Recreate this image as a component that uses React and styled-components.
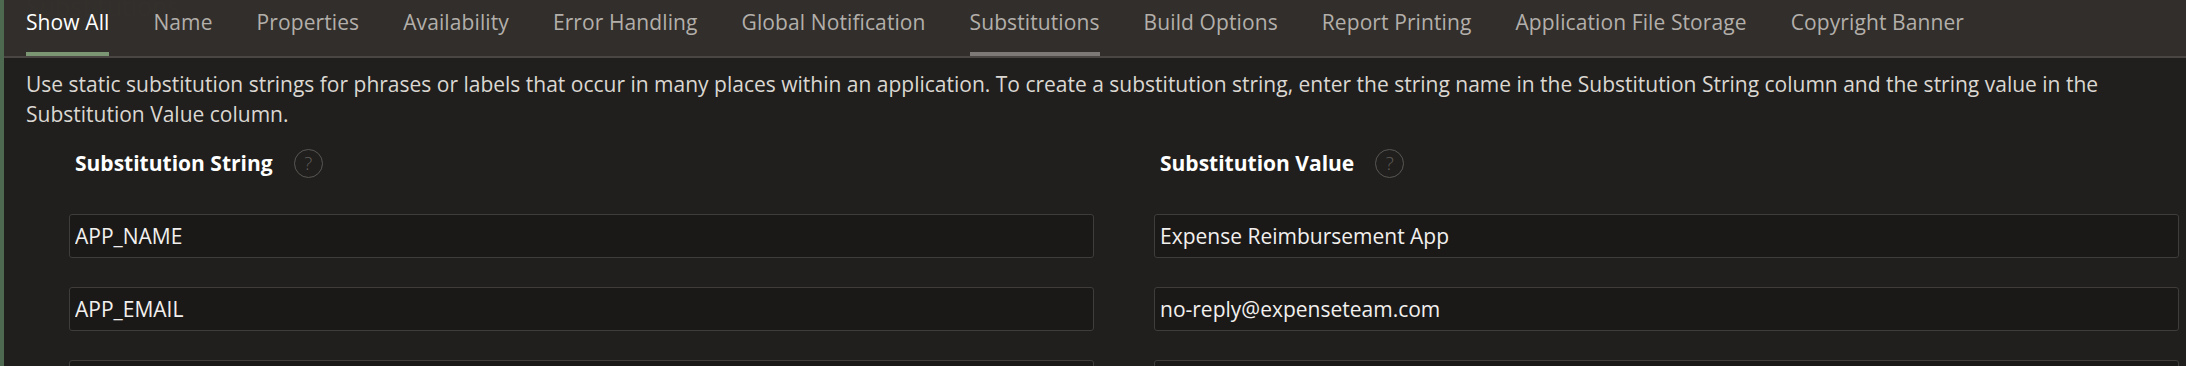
import React from 'react';
import styled, { createGlobalStyle } from 'styled-components';

const GlobalStyle = createGlobalStyle`
  html, body {
    margin: 0;
    padding: 0;
    background: #201f1d;
  }
  body {
    font-family: 'Open Sans', 'Noto Sans', sans-serif;
    color: #d9d5d0;
  }
`;

const PageDiv = styled.div`
  position: relative;
  min-height: 366px;
  border-left: 4px solid #4d6a51;
  background: #201f1d;
  overflow: hidden;
`;

// faded region title scrolled under the tab bar
const GhostTitle = styled.div`
  position: absolute;
  top: -11px;
  left: 22px;
  font-size: 25px;
  color: #3a3633;
  white-space: nowrap;
  pointer-events: none;
`;

const TabBar = styled.nav`
  position: relative;
  display: flex;
  height: 56px;
  background: rgba(51, 47, 44, 0.93);
  border-bottom: 2px solid #4a4643;
`;

const Tab = styled.div`
  box-sizing: border-box;
  height: 56px;
  margin: 0 22px;
  padding-top: 8px;
  font-size: 21px;
  line-height: 29px;
  letter-spacing: 0.1px;
  white-space: nowrap;
  color: ${(p) => (p.$active ? '#ffffff' : '#b3afaa')};
  border-bottom: 4px solid
    ${(p) => (p.$active ? '#7b9672' : p.$current ? '#7d7977' : 'transparent')};
`;

const Description = styled.p`
  margin: 0;
  padding: 11px 22px 0;
  font-size: 21px;
  line-height: 30.4px;
  color: #dbd7d2;
`;

const FormGrid = styled.div`
  display: grid;
  grid-template-columns: 1fr 1fr;
  column-gap: 60px;
  row-gap: 29px;
  padding: 19px 7px 0 65px;
`;

const ColumnHeader = styled.div`
  display: flex;
  align-items: center;
  gap: 21px;
  padding-left: 6px;
  margin-bottom: 7px;
  font-size: 21px;
  font-weight: 700;
  line-height: 29px;
  color: #ffffff;
`;

const HelpIcon = styled.span`
  box-sizing: border-box;
  display: inline-flex;
  align-items: center;
  justify-content: center;
  width: 29px;
  height: 29px;
  border: 1.5px solid #5a5653;
  border-radius: 50%;
  font-size: 19px;
  font-weight: 300;
  line-height: 1;
  color: #5f5b58;
`;

const TextInput = styled.input`
  box-sizing: border-box;
  width: 100%;
  height: 44px;
  margin: 0;
  padding: 0 5px;
  border: 1px solid #3f3c3a;
  border-radius: 3px;
  background: #1a1918;
  font-family: 'Open Sans', 'Noto Sans', sans-serif;
  font-size: 21px;
  color: #f2f0ee;
  outline: none;
`;

const tabs = [
  'Show All',
  'Name',
  'Properties',
  'Availability',
  'Error Handling',
  'Global Notification',
  'Substitutions',
  'Build Options',
  'Report Printing',
  'Application File Storage',
  'Copyright Banner',
];

const rows = [
  ['APP_NAME', 'Expense Reimbursement App'],
  ['APP_EMAIL', 'no-reply@expenseteam.com'],
  ['', ''],
];

const App = () => {
  return (
    <>
      <GlobalStyle />
      <PageDiv>
        <GhostTitle>Substitutions</GhostTitle>
        <TabBar>
          {tabs.map((tab) => (
            <Tab key={tab} $active={tab === 'Show All'} $current={tab === 'Substitutions'}>
              {tab}
            </Tab>
          ))}
        </TabBar>
        <Description>
          Use static substitution strings for phrases or labels that occur in many places within an
          application. To create a substitution string, enter the string name in the Substitution
          String column and the string value in the Substitution Value column.
        </Description>
        <FormGrid>
          <ColumnHeader>
            Substitution String <HelpIcon>?</HelpIcon>
          </ColumnHeader>
          <ColumnHeader>
            Substitution Value <HelpIcon>?</HelpIcon>
          </ColumnHeader>
          {rows.map((row, index) => (
            <React.Fragment key={index}>
              <TextInput defaultValue={row[0]} readOnly />
              <TextInput defaultValue={row[1]} readOnly />
            </React.Fragment>
          ))}
        </FormGrid>
      </PageDiv>
    </>
  );
};

export default App;
